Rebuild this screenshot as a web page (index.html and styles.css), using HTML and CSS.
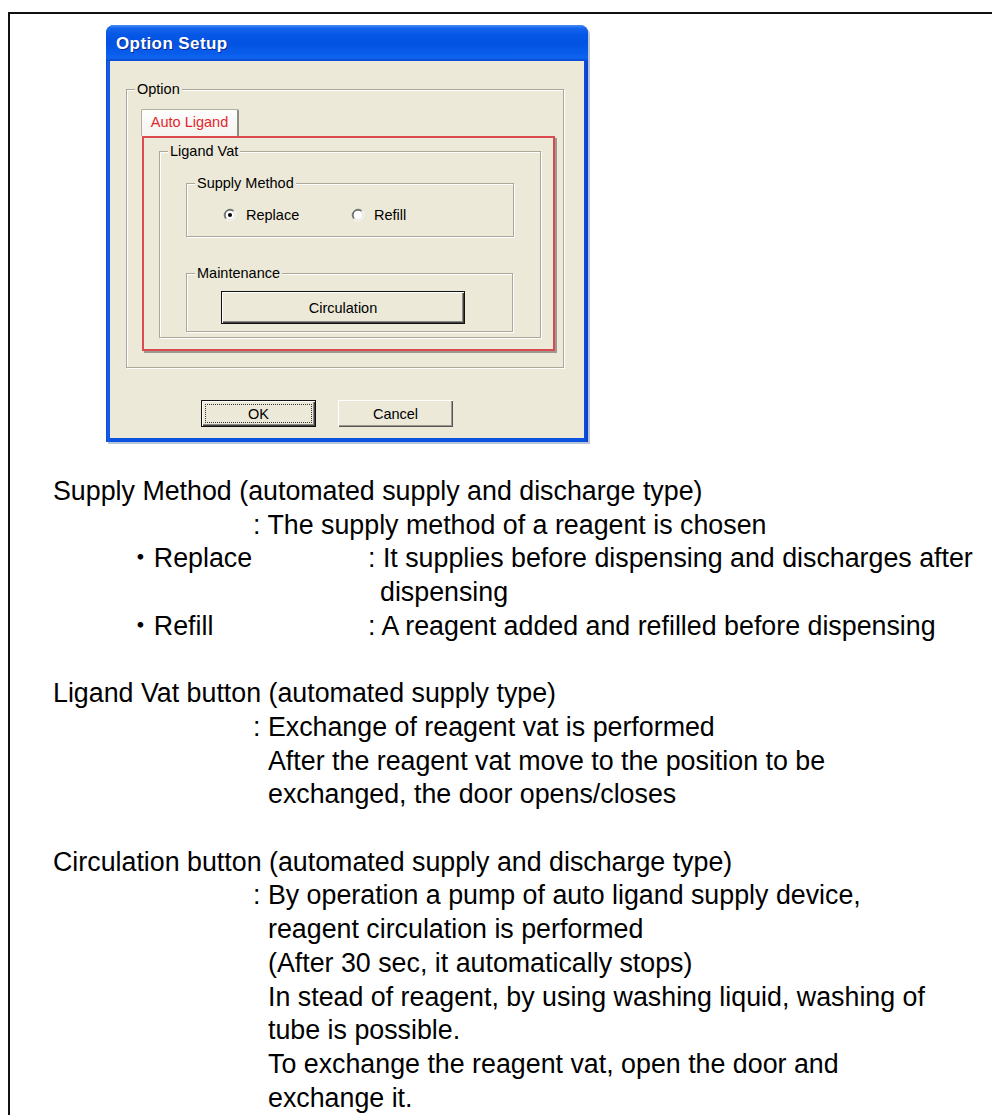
FILE: index.html
```html
<!DOCTYPE html>
<html lang="en">
<head>
<meta charset="utf-8">
<title>Option Setup</title>
<link rel="stylesheet" href="styles.css">
</head>
<body>
<div class="page">
  <div class="window">
    <div class="titlebar"><span class="title">Option Setup</span></div>
    <div class="client">
      <div class="group option-group">
        <span class="legend">Option</span>
        <div class="tabstrip"><div class="tab">Auto Ligand</div></div>
        <div class="tabpanel">
          <div class="group vat-group">
            <span class="legend">Ligand Vat</span>
            <div class="group supply-group">
              <span class="legend">Supply Method</span>
              <div class="radios">
                <div class="radio radio-replace">
                  <svg class="radio-icon" width="14" height="14" viewBox="0 0 14 14">
                    <circle cx="7" cy="7" r="6" fill="#fff"/>
                    <path d="M2.76 11.24 A6 6 0 0 1 11.24 2.76" fill="none" stroke="#8a8a86" stroke-width="1"/>
                    <path d="M3.46 10.54 A5 5 0 0 1 10.54 3.46" fill="none" stroke="#3c3c3c" stroke-width="1"/>
                    <path d="M11.24 2.76 A6 6 0 0 1 2.76 11.24" fill="none" stroke="#ffffff" stroke-width="1"/>
                    <path d="M10.54 3.46 A5 5 0 0 1 3.46 10.54" fill="none" stroke="#dcd9cc" stroke-width="1"/>
                    <circle cx="7" cy="7" r="2" fill="#000"/>
                  </svg>
                  <span>Replace</span>
                </div>
                <div class="radio">
                  <svg class="radio-icon" width="14" height="14" viewBox="0 0 14 14">
                    <circle cx="7" cy="7" r="6" fill="#fff"/>
                    <path d="M2.76 11.24 A6 6 0 0 1 11.24 2.76" fill="none" stroke="#8a8a86" stroke-width="1"/>
                    <path d="M3.46 10.54 A5 5 0 0 1 10.54 3.46" fill="none" stroke="#3c3c3c" stroke-width="1"/>
                    <path d="M11.24 2.76 A6 6 0 0 1 2.76 11.24" fill="none" stroke="#ffffff" stroke-width="1"/>
                    <path d="M10.54 3.46 A5 5 0 0 1 3.46 10.54" fill="none" stroke="#dcd9cc" stroke-width="1"/>
                  </svg>
                  <span>Refill</span>
                </div>
              </div>
            </div>
            <div class="group maint-group">
              <span class="legend">Maintenance</span>
              <div class="btn btn-default circ">Circulation</div>
            </div>
          </div>
        </div>
      </div>
      <div class="actions">
        <div class="btn btn-default ok"><span class="focus">OK</span></div>
        <div class="btn cancel">Cancel</div>
      </div>
    </div>
  </div>

  <div class="notes">
    <div class="entry">
      <p class="head">Supply Method (automated supply and discharge type)</p>
      <p class="desc">: The supply method of a reagent is chosen</p>
      <div class="opt">
        <span class="opt-name"><span class="dot">・</span>Replace</span>
        <p class="opt-desc">: It supplies before dispensing and discharges after<br>dispensing</p>
      </div>
      <div class="opt">
        <span class="opt-name"><span class="dot">・</span>Refill</span>
        <p class="opt-desc">: A reagent added and refilled before dispensing</p>
      </div>
    </div>
    <div class="entry">
      <p class="head">Ligand Vat button (automated supply type)</p>
      <p class="desc">: Exchange of reagent vat is performed<br>After the reagent vat move to the position to be<br>exchanged, the door opens/closes</p>
    </div>
    <div class="entry">
      <p class="head">Circulation button (automated supply and discharge type)</p>
      <p class="desc">: By operation a pump of auto ligand supply device,<br>reagent circulation is performed<br>(After 30 sec, it automatically stops)<br>In stead of reagent, by using washing liquid, washing of<br>tube is possible.<br>To exchange the reagent vat, open the door and<br>exchange it.</p>
    </div>
  </div>
</div>
</body>
</html>
```

FILE: styles.css
```css
html {
  overflow: hidden;
}

body {
  margin: 0;
  background: #ffffff;
}

/* document frame: its right and bottom edges lie beyond the window */
.page {
  box-sizing: border-box;
  margin: 12px 0 0 8px;
  width: 984px;
  height: 1103px;
  border-top: 2px solid #111111;
  border-left: 2px solid #111111;
  overflow: hidden;
}

/* ---------- dialog window ---------- */

.window {
  box-sizing: border-box;
  margin: 11px 0 0 96px;
  width: 482px;
  height: 417px;
  display: flex;
  flex-direction: column;
  padding: 0 4px 4px;
  border-radius: 8px 8px 0 0;
  background: linear-gradient(to right, #0a46d6 0, #1a5fe6 2px, #0b52e0 4px, #0b52e0 calc(100% - 4px), #0a3fc8 100%);
  box-shadow: 2px 2px 0 #b9c4d8;
  font-family: "Liberation Sans", Arial, sans-serif;
  font-size: 14.5px;
  color: #000000;
}

.titlebar {
  flex: none;
  height: 36px;
  margin: 0 -4px;
  display: flex;
  align-items: center;
  padding: 2px 0 0 10px;
  box-sizing: border-box;
  border-radius: 8px 8px 0 0;
  background: linear-gradient(to bottom, #4b90f6 0, #1565ee 3px, #0758e6 9px, #0352e2 50%, #0a5eec 82%, #0f66f0 90%, #0948d2 100%);
}

.title {
  font-weight: bold;
  font-size: 17px;
  letter-spacing: 0.4px;
  color: #ffffff;
  text-shadow: 1px 1px 0 #0a2a8a;
}

.client {
  flex: 1;
  background: #ece9d8;
  overflow: hidden;
}

/* ---------- group boxes ---------- */

.group {
  box-sizing: border-box;
  border: 1px solid #aca899;
  box-shadow: 1px 1px 0 #ffffff, inset 1px 1px 0 #ffffff;
}

.legend {
  display: block;
  width: fit-content;
  height: 17px;
  line-height: 17px;
  margin: -9px 0 0 8px;
  padding: 0 2px;
  background: #ece9d8;
}

.option-group {
  margin: 28px 0 0 16px;
  width: 438px;
  height: 279px;
}

.tabstrip {
  margin-top: 11px;
  padding-left: 14px;
}

.tab {
  box-sizing: border-box;
  width: 98px;
  height: 27px;
  padding-top: 4px;
  text-align: center;
  color: #e3262c;
  background: linear-gradient(to bottom, #fefefd, #f4f3ee);
  border: 1px solid #b3b0a3;
  border-right: 2px solid #8e8c83;
  border-bottom: none;
  border-radius: 2px 2px 0 0;
}

.tabpanel {
  box-sizing: border-box;
  margin-left: 15px;
  width: 413px;
  height: 215px;
  border: 2px solid #da4a4f;
  box-shadow: 2px 2px 0 #9c9a90;
  overflow: hidden;
}

.vat-group {
  margin: 13px 0 0 15px;
  width: 382px;
  height: 187px;
}

.supply-group {
  margin: 23px 0 0 26px;
  width: 328px;
  height: 54px;
}

.radios {
  display: flex;
  margin-top: 14px;
  padding-left: 36px;
  height: 18px;
}

.radio {
  display: flex;
  align-items: center;
  gap: 9px;
}

.radio-replace {
  width: 128px;
}

.radio-icon {
  flex: none;
  display: block;
}

.maint-group {
  margin: 36px 0 0 26px;
  width: 327px;
  height: 59px;
}

/* ---------- buttons ---------- */

.btn {
  box-sizing: border-box;
  display: flex;
  align-items: center;
  justify-content: center;
  background: #ece9d8;
  box-shadow: inset 1px 1px 0 #ffffff, inset -1px -1px 0 #404040, inset -2px -2px 0 #8c8a80;
}

.btn-default {
  border: 1px solid #101010;
}

.circ {
  margin: 9px 0 0 34px;
  width: 244px;
  height: 33px;
}

.actions {
  display: flex;
  gap: 22px;
  margin-top: 32px;
  padding-left: 91px;
}

.ok,
.cancel {
  width: 115px;
  height: 27px;
}

.cancel {
  box-shadow: inset 1px 1px 0 #ffffff, inset -1px -1px 0 #555555, inset -2px -2px 0 #9d9b90;
}

.focus {
  box-sizing: border-box;
  flex: 1;
  align-self: stretch;
  margin: 3px;
  border: 1px dotted #333333;
  display: flex;
  align-items: center;
  justify-content: center;
}

/* ---------- explanatory notes ---------- */

.notes {
  margin: 33px 0 0 43px;
  font-family: "Liberation Sans", Arial, "Noto Sans CJK JP", sans-serif;
  font-size: 26.8px;
  line-height: 33.7px;
  color: #000000;
}

.head,
.desc,
.opt-desc {
  margin: 0;
}

.entry + .entry {
  margin-top: 33.7px;
}

.desc {
  padding-left: 215px;
  text-indent: -15px;
}

.opt {
  display: grid;
  grid-template-columns: 241px auto;
  margin-left: 74px;
}

.dot {
  font-family: "Noto Sans CJK JP", sans-serif;
  line-height: 20px;
}

.opt-desc {
  padding-left: 12px;
  text-indent: -12px;
}
```
